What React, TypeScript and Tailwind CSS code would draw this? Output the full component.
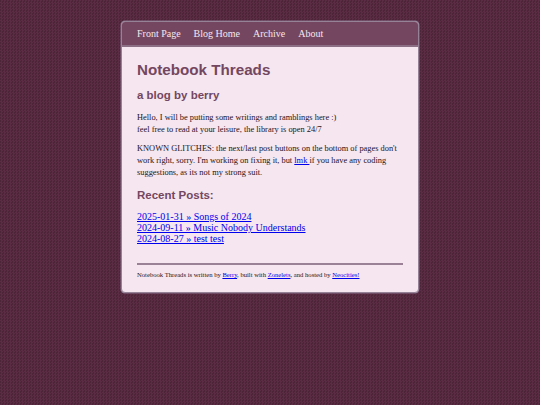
const serif = "font-['Liberation_Serif',serif]";
const sans = "font-['Liberation_Sans',Arial,sans-serif]";

const navLinks = ["Front Page", "Blog Home", "Archive", "About"];
const posts = [
  "2025-01-31 » Songs of 2024",
  "2024-09-11 » Music Nobody Understands",
  "2024-08-27 » test test",
];

export default function App() {
  return (
    <div className={`flex h-[405px] w-[540px] justify-center overflow-hidden bg-[#53273f] bg-[conic-gradient(#5c2b44_25%,#4c2539_0_50%,#5c2b44_0_75%,#4c2539_0)] bg-[length:3px_3px] pt-[21px] ${serif}`}>
      <div className="h-[272px] w-[298px] overflow-hidden rounded-[4px] border border-[#968296] bg-[#f5e6ef] shadow-[0_0_0_0.5px_#85708a]">
        <nav className="flex h-[25px] items-center gap-[13px] border-b-[2px] border-[#8c6f85] bg-[#74465f] pl-[15px] text-[10px] text-[#f5e6ef]">
          {navLinks.map((link) => (
            <span key={link}>{link}</span>
          ))}
        </nav>
        <main className="px-[15px] pt-[14px] text-[#1f1218]">
          <h1 className={`text-[15.2px] leading-[18px] font-bold text-[#74465f] ${sans}`}>Notebook Threads</h1>
          <h2 className={`mt-[9px] text-[11.5px] leading-[14px] font-bold text-[#74465f] ${sans}`}>a blog by berry</h2>
          <p className="mt-[10px] text-[8.4px] leading-[12px]">
            Hello, I will be putting some writings and ramblings here :)
            <br />
            feel free to read at your leisure, the library is open 24/7
          </p>
          <p className="mt-[7px] text-[8.4px] leading-[12px]">
            KNOWN GLITCHES: the next/last post buttons on the bottom of pages don't work right, sorry. I'm working on fixing it, but{" "}
            <a className="text-[#0000ee] underline">lmk </a>
            if you have any coding suggestions, as its not my strong suit.
          </p>
          <h3 className={`mt-[9px] text-[11.5px] leading-[14px] font-bold text-[#74465f] ${sans}`}>Recent Posts:</h3>
          <ul className="mt-[10px] text-[10px] leading-[10.8px] text-[#0000ee] underline">
            {posts.map((post) => (
              <li key={post}>{post}</li>
            ))}
          </ul>
          <hr className="mt-[19px] border-t-[2px] border-[#9b8196]" />
          <p className="mt-[5px] text-[6.63px] leading-[9px]">
            Notebook Threads is written by <a className="text-[#0000ee] underline">Berry</a>, built with{" "}
            <a className="text-[#0000ee] underline">Zonelets</a>, and hosted by <a className="text-[#0000ee] underline">Neocities!</a>
          </p>
        </main>
      </div>
    </div>
  );
}
